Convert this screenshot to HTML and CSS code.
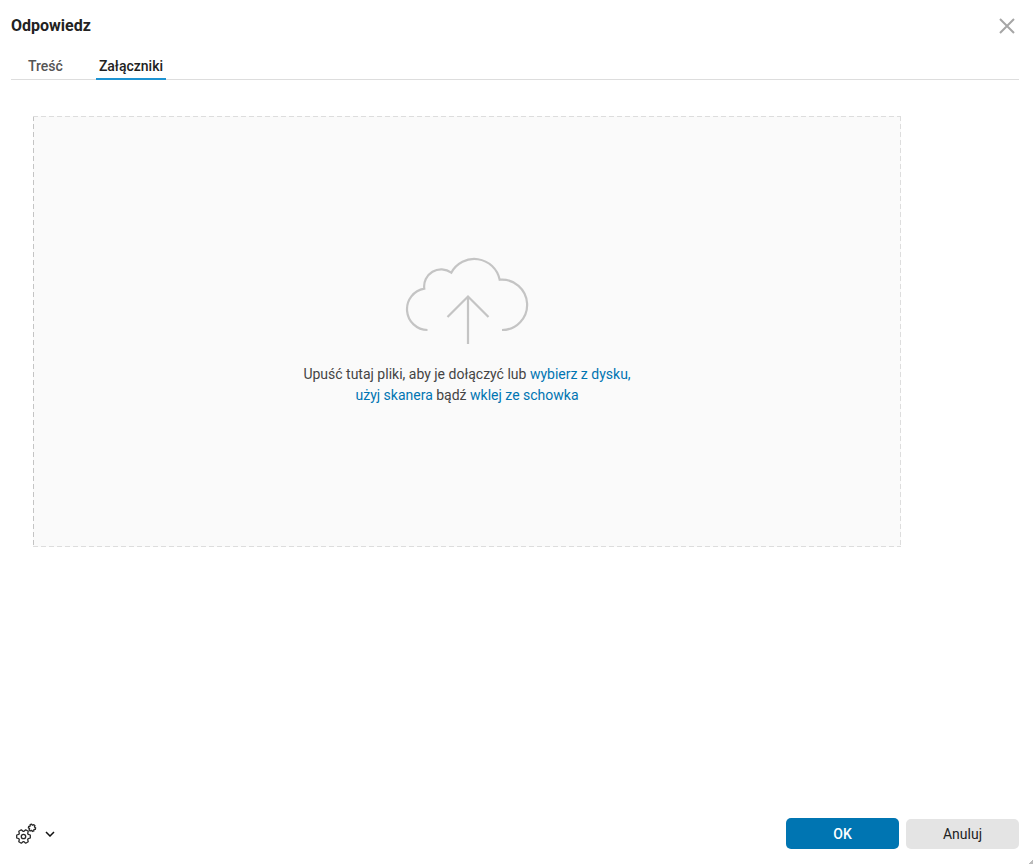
FILE: index.html
```html
<!DOCTYPE html>
<html lang="pl">
<head>
<meta charset="utf-8">
<title>Odpowiedz</title>
<link rel="stylesheet" href="styles.css">
</head>
<body>
<main class="dialog">
  <header class="dialog-header">
    <h1 class="dialog-title">Odpowiedz</h1>
    <button class="close" type="button" aria-label="Zamknij">
      <svg width="16" height="16" viewBox="0 0 16 16" fill="none" stroke="#a6a6a6" stroke-width="2"><path d="M1 1 15 15M15 1 1 15"/></svg>
    </button>
  </header>
  <nav class="tabs" role="tablist">
    <button class="tab" type="button" role="tab" aria-selected="false">Treść</button>
    <button class="tab tab-active" type="button" role="tab" aria-selected="true">Załączniki</button>
  </nav>
  <section class="content">
    <div class="dropzone">
      <svg class="cloud" width="124" height="90" viewBox="0 0 124 90" fill="none" stroke="#c4c4c4" stroke-width="2.200">
        <path d="M22.500 74A20.800 20.800 0 0 1 19.300 32.700A17 17 0 0 1 46.300 16.700A26 26 0 0 1 94.700 23.700A25.200 25.200 0 1 1 97 74"/>
        <path d="M63 88V40M42.500 61 63 40.500 83.500 61"/>
      </svg>
      <p class="hint">Upuść tutaj pliki, aby je dołączyć lub <a href="#">wybierz z dysku,</a><br><a href="#">użyj skanera</a> bądź <a href="#">wklej ze schowka</a></p>
    </div>
  </section>
  <footer class="dialog-footer">
    <button class="settings" type="button" aria-label="Ustawienia">
      <svg width="22" height="22" viewBox="0 0 22 22" fill="none" stroke="#2a2a2a" stroke-width="1.300" stroke-linejoin="round">
        <g transform="translate(8.500 13.500)">
          <path id="cog" d="M6.800-1.500V1.500L4.700 2.100 4.200 3.100 4.700 5.200 2.200 6.700.5 5.200H-.5L-2.200 6.700-4.700 5.200-4.200 3.100-4.700 2.100-6.800 1.500V-1.500L-4.700-2.100-4.200-3.100-4.700-5.200-2.200-6.700-.5-5.200H.5L2.200-6.700 4.700-5.200 4.200-3.100 4.700-2.100Z"/>
          <circle r="2.200"/>
        </g>
        <use href="#cog" transform="translate(17 4.800) rotate(12) scale(.52)" stroke-width="2.600"/>
      </svg>
      <svg class="chevron" width="10" height="6" viewBox="0 0 10 6" fill="none" stroke="#111" stroke-width="1.500"><path d="M1 1 5 5 9 1"/></svg>
    </button>
    <div class="actions">
      <button class="btn btn-primary" type="button">OK</button>
      <button class="btn btn-secondary" type="button">Anuluj</button>
    </div>
  </footer>
</main>
</body>
</html>
```
FILE: styles.css
```css
* {
  box-sizing: border-box;
}

body {
  margin: 0;
  background: #fff;
  color: #222;
  font-family: Roboto, "Liberation Sans", sans-serif;
  font-size: 14px;
}

button {
  border: 0;
  padding: 0;
  background: none;
  color: inherit;
  font: inherit;
  cursor: pointer;
}

.dialog {
  display: flex;
  flex-direction: column;
  min-height: 100vh;
  padding: 14px 14px 15px 11px;
  background: linear-gradient(135deg, transparent 50%, #bbb 50%) right bottom / 4px 4px no-repeat;
}

.dialog-header {
  display: flex;
  align-items: center;
  justify-content: space-between;
  height: 24px;
}

.dialog-title {
  margin: 0;
  font-size: 16px;
  font-weight: 700;
  line-height: 24px;
}

.close {
  display: flex;
  padding: 4px;
}

.tabs {
  display: flex;
  gap: 30px;
  margin-top: 15px;
  padding-left: 14px;
  border-bottom: 1px solid #ddd;
}

.tab {
  margin-bottom: -1px;
  padding: 1px 3px 0;
  border-bottom: 2px solid transparent;
  color: #555;
  font-weight: 500;
  line-height: 24px;
}

.tab-active {
  border-bottom-color: #1d93d2;
  color: #222;
}

.content {
  flex: 1;
  padding: 36px 118px 0 22px;
}

.dropzone {
  display: flex;
  flex-direction: column;
  align-items: center;
  justify-content: center;
  gap: 18px;
  min-height: 431px;
  padding-bottom: 2px;
  background:
    repeating-linear-gradient(90deg, #ddd 0 5px, transparent 5px 8px) top / 100% 1px no-repeat,
    repeating-linear-gradient(90deg, #ddd 0 5px, transparent 5px 8px) bottom / 100% 1px no-repeat,
    repeating-linear-gradient(#c4c4c4 0 5px, transparent 5px 8px) left / 1px 100% no-repeat,
    repeating-linear-gradient(#ddd 0 5px, transparent 5px 8px) right / 1px 100% no-repeat,
    #fafafa;
}

.cloud {
  display: block;
  overflow: visible;
}

.hint {
  margin: 0;
  color: #444;
  line-height: 21px;
  text-align: center;
}

.hint a {
  color: #0075b2;
  text-decoration: none;
}

.dialog-footer {
  display: flex;
  align-items: center;
  justify-content: space-between;
}

.settings {
  display: flex;
  align-items: center;
  gap: 8px;
  padding-left: 4px;
}

.actions {
  display: flex;
  align-items: flex-end;
  gap: 7px;
}

.btn {
  width: 113px;
  height: 30px;
  border-radius: 5px;
}

.btn-primary {
  height: 31px;
  background: #0075b2;
  color: #fff;
  font-weight: 500;
}

.btn-secondary {
  background: #e4e4e4;
}
```
